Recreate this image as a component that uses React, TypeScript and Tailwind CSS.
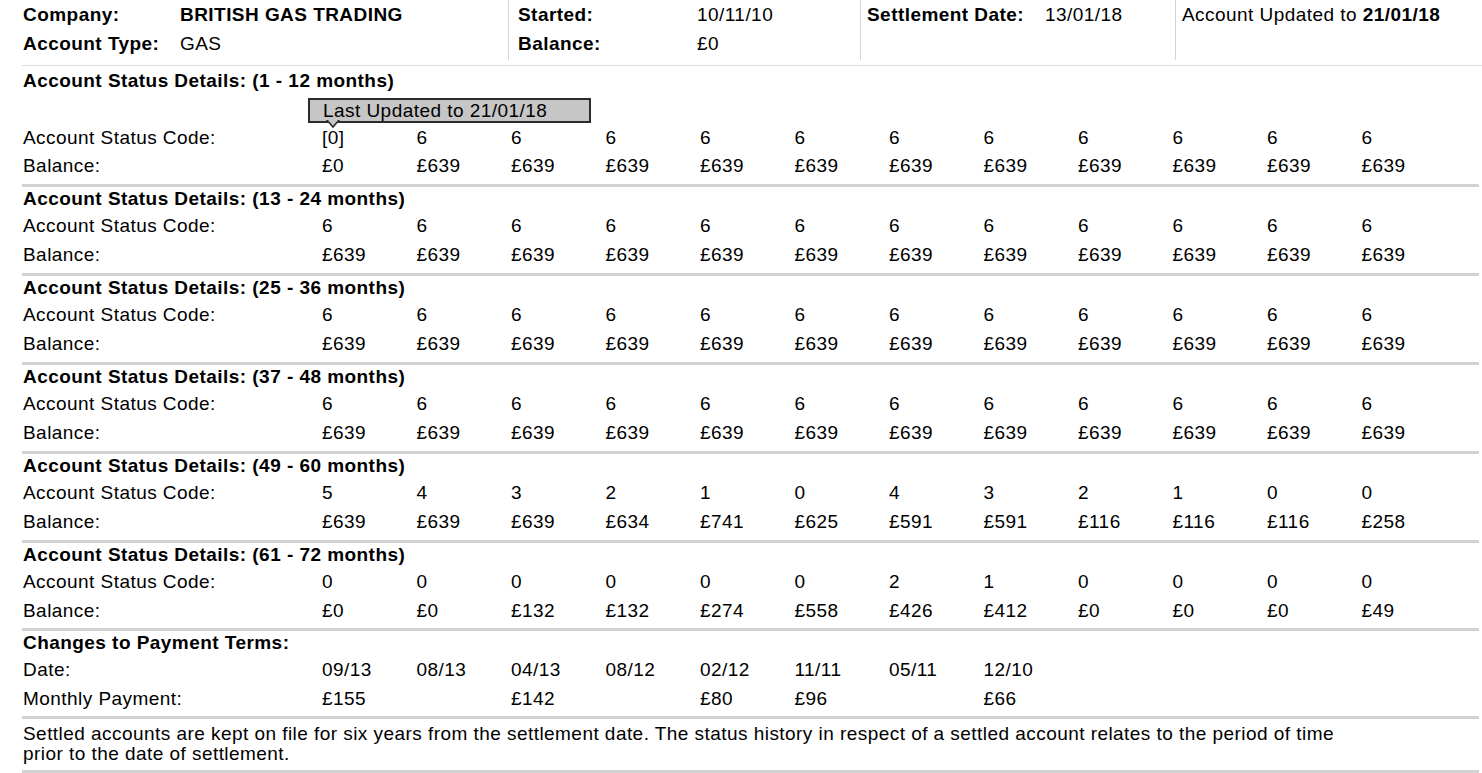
const cols = 'grid grid-cols-[300px_repeat(12,94.5px)]'

type Section = {
  title: string
  codes: string[]
  balances: string[]
}

const sixes = Array(12).fill('6')
const full = Array(12).fill('£639')

const sections: Section[] = [
  {
    title: 'Account Status Details: (1 - 12 months)',
    codes: ['[0]', ...sixes.slice(1)],
    balances: ['£0', ...full.slice(1)],
  },
  { title: 'Account Status Details: (13 - 24 months)', codes: sixes, balances: full },
  { title: 'Account Status Details: (25 - 36 months)', codes: sixes, balances: full },
  { title: 'Account Status Details: (37 - 48 months)', codes: sixes, balances: full },
  {
    title: 'Account Status Details: (49 - 60 months)',
    codes: ['5', '4', '3', '2', '1', '0', '4', '3', '2', '1', '0', '0'],
    balances: ['£639', '£639', '£639', '£634', '£741', '£625', '£591', '£591', '£116', '£116', '£116', '£258'],
  },
  {
    title: 'Account Status Details: (61 - 72 months)',
    codes: ['0', '0', '0', '0', '0', '0', '2', '1', '0', '0', '0', '0'],
    balances: ['£0', '£0', '£132', '£132', '£274', '£558', '£426', '£412', '£0', '£0', '£0', '£49'],
  },
]

const paymentDates = ['09/13', '08/13', '04/13', '08/12', '02/12', '11/11', '05/11', '12/10']
const paymentAmounts = ['£155', '', '£142', '', '£80', '£96', '', '£66']

function Separator() {
  return <div className="mt-[4px] h-[3px] bg-[#d2d2d2]" />
}

function DataRow({ label, values, height = 'h-[28px]' }: { label: string; values: string[]; height?: string }) {
  return (
    <div className={`${cols} ${height} items-center`}>
      <div className="pl-px">{label}</div>
      {values.map((v, i) => (
        <div key={i}>{v}</div>
      ))}
    </div>
  )
}

function Title({ children }: { children: React.ReactNode }) {
  return <div className="flex h-[25px] items-center pl-px font-bold">{children}</div>
}

/** Серая плашка с хвостиком над первым значением статуса. */
function LastUpdated() {
  return (
    <div className={`${cols} h-[30px]`}>
      <div />
      <div className="relative">
        <div className="absolute left-[-14px] top-[4.5px] flex h-[25px] w-[283px] items-center border-2 border-[#2b2b2b] bg-[#c6c6c6] pl-[13px] leading-none">
          Last Updated to 21/01/18
        </div>
        <svg className="absolute left-[4px] top-[26px]" width="14" height="9" viewBox="0 0 14 9">
          <polygon points="1,0 7,7 13,0" fill="#c6c6c6" stroke="#2b2b2b" strokeWidth="1.6" />
          <rect x="2.5" y="0" width="9" height="1.4" fill="#c6c6c6" />
        </svg>
      </div>
    </div>
  )
}

function Header() {
  return (
    <div className="flex h-[60px] leading-[29px]">
      <div className="w-[486px] pl-px">
        <div className="flex">
          <span className="w-[157px] font-bold">Company:</span>
          <span className="font-bold">BRITISH GAS TRADING</span>
        </div>
        <div className="flex">
          <span className="w-[157px] font-bold">Account Type:</span>
          <span>GAS</span>
        </div>
      </div>
      <div className="w-[352px] border-l border-[#d4d4d4] pl-[9px]">
        <div className="flex">
          <span className="w-[179px] font-bold">Started:</span>
          <span>10/11/10</span>
        </div>
        <div className="flex">
          <span className="w-[179px] font-bold">Balance:</span>
          <span>£0</span>
        </div>
      </div>
      <div className="w-[315px] border-l border-[#d4d4d4] pl-[6px]">
        <div className="flex">
          <span className="w-[178px] font-bold">Settlement Date:</span>
          <span>13/01/18</span>
        </div>
      </div>
      <div className="flex-1 border-l border-[#d4d4d4] pl-[6px]">
        Account Updated to <span className="font-bold">21/01/18</span>
      </div>
    </div>
  )
}

export default function App() {
  return (
    <div className="min-h-screen bg-white pl-[22px] pr-[3px] font-['Liberation_Sans',Arial,sans-serif] text-[19px] tracking-[0.45px] text-black">
      <Header />
      <div className="-mr-[3px] mt-[5px] h-px bg-[#dadada]" />

      {sections.map((s, i) => (
        <div key={i}>
          {i === 0 ? <div className="h-[2.5px]" /> : null}
          <Title>{s.title}</Title>
          {i === 0 ? <LastUpdated /> : null}
          <DataRow label="Account Status Code:" values={s.codes} height={i === 0 ? 'h-[28px]' : 'h-[29px]'} />
          <DataRow label="Balance:" values={s.balances} height={i === 5 ? 'h-[27px]' : 'h-[28px]'} />
          <Separator />
        </div>
      ))}

      <Title>Changes to Payment Terms:</Title>
      <DataRow label="Date:" values={paymentDates} height="h-[29px]" />
      <DataRow label="Monthly Payment:" values={paymentAmounts} height="h-[27px]" />
      <Separator />

      <p className="mt-[5px] pl-px leading-[20px]">
        Settled accounts are kept on file for six years from the settlement date. The status history in respect of a settled account relates to the period of time
        <br />
        prior to the date of settlement.
      </p>
      <div className="mt-[6px] h-[3px] bg-[#d2d2d2]" />
    </div>
  )
}
